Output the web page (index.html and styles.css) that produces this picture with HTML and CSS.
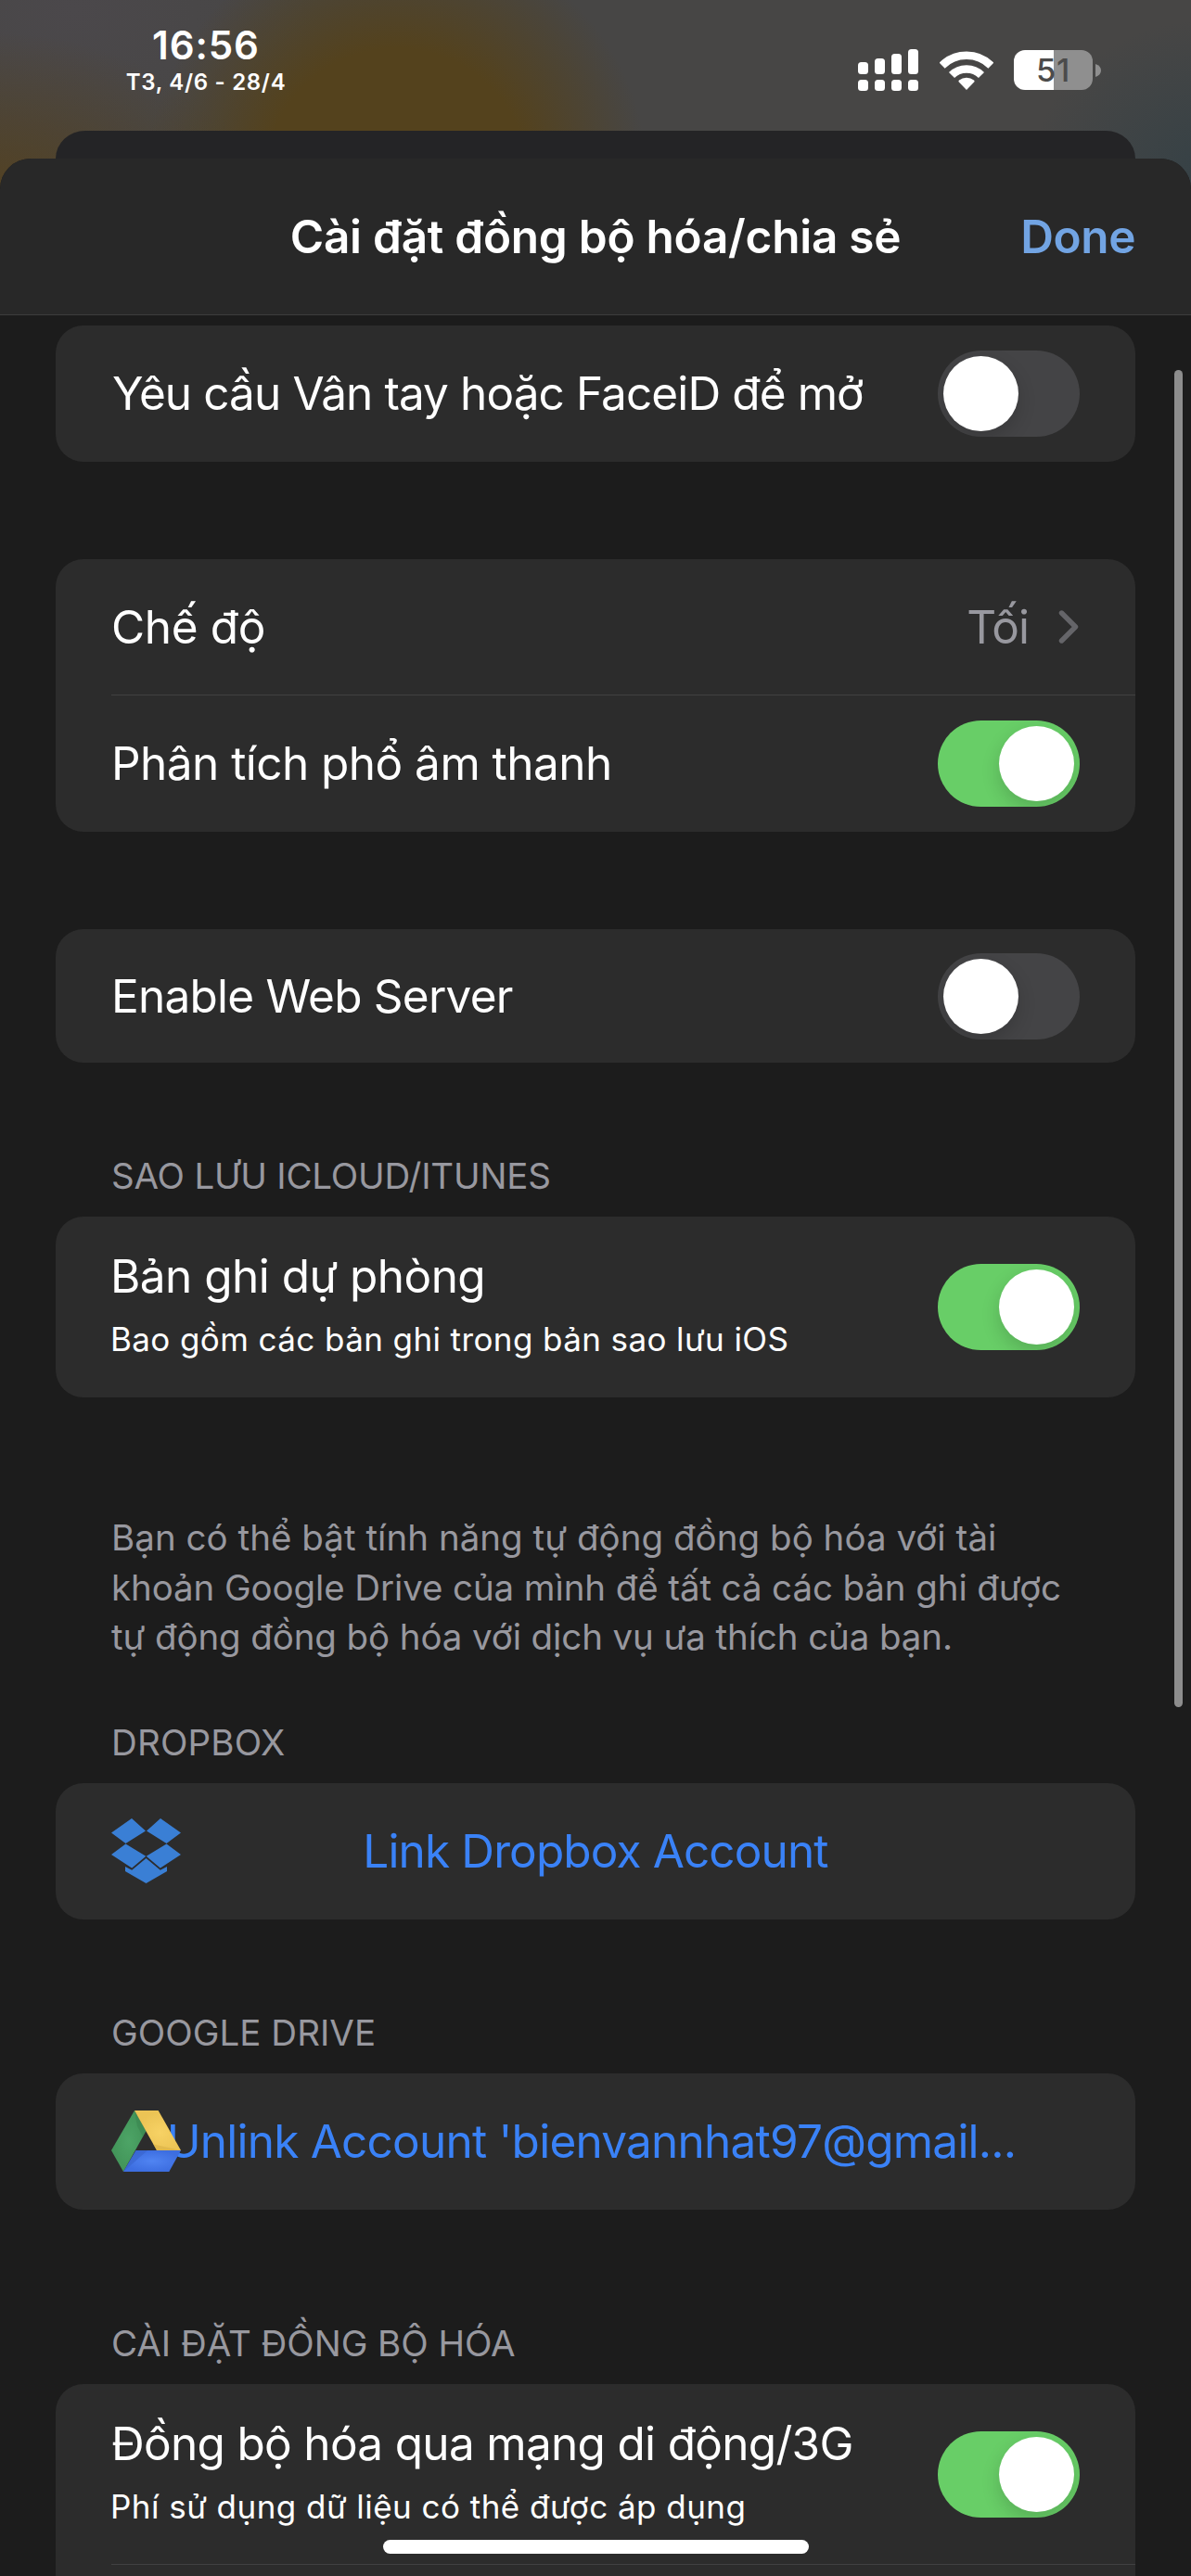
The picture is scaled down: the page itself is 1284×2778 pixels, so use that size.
FILE: index.html
```html
<!DOCTYPE html>
<html lang="vi">
<head>
<meta charset="utf-8">
<title>Cài đặt đồng bộ hóa/chia sẻ</title>
<link rel="stylesheet" href="styles.css">
</head>
<body>
<div class="screen">
  <header class="status">
    <div class="clock">
      <div class="time">16:56</div>
      <div class="date">T3, 4/6 - 28/4</div>
    </div>
    <div class="indicators">
      <svg class="signal" viewBox="0 0 65 46" fill="#fff">
        <rect x="0" y="14" width="11" height="13" rx="3.5"/><rect x="18" y="10" width="11" height="17" rx="3.5"/><rect x="36" y="5" width="11" height="22" rx="3.5"/><rect x="54" y="0" width="11" height="27" rx="3.5"/>
        <rect x="0" y="33" width="11" height="12" rx="3.5"/><rect x="18" y="33" width="11" height="12" rx="3.5"/><rect x="36" y="33" width="11" height="12" rx="3.5"/><rect x="54" y="33" width="11" height="12" rx="3.5"/>
      </svg>
      <svg class="wifi" viewBox="0 0 58 42">
        <g fill="none" stroke="#fff" stroke-width="8.6">
          <path d="M2.6 15.6A37.4 37.4 0 0 1 55.4 15.6"/>
          <path d="M13 26A22.8 22.8 0 0 1 45 26"/>
        </g>
        <path d="M29 42L20.6 33.2Q20 32.4 21 31.6A12.7 12.7 0 0 1 37 31.6Q38 32.4 37.4 33.2Z" fill="#fff"/>
      </svg>
      <div class="battery"><span class="level">51</span></div>
      <svg class="nub" viewBox="0 0 6 14"><path d="M0 0Q6 2 6 7T0 14Z" fill="#8f8f8f"/></svg>
    </div>
  </header>
  <div class="sheet-behind"></div>
  <main class="sheet">
    <div class="navbar">
      <h1 class="nav-title">Cài đặt đồng bộ hóa/chia sẻ</h1>
      <span class="done">Done</span>
    </div>

    <section class="card first">
      <div class="row"><span class="label lock">Yêu cầu Vân tay hoặc FaceiD để mở</span><span class="switch"></span></div>
    </section>

    <section class="card">
      <div class="row"><span class="label mode">Chế độ</span><span class="value">Tối</span>
        <svg class="chevron" viewBox="0 0 22 38"><path d="M3.5 4L18.5 19L3.5 34" fill="none" stroke="#656569" stroke-width="5.4" stroke-linecap="round" stroke-linejoin="round"/></svg>
      </div>
      <div class="divider"></div>
      <div class="row"><span class="label spectrum">Phân tích phổ âm thanh</span><span class="switch on"></span></div>
    </section>

    <section class="card short">
      <div class="row"><span class="label server">Enable Web Server</span><span class="switch"></span></div>
    </section>

    <h2 class="group">SAO LƯU ICLOUD/ITUNES</h2>
    <section class="card titled">
      <div class="row tall">
        <div class="stack"><span class="label backup">Bản ghi dự phòng</span><span class="sub">Bao gồm các bản ghi trong bản sao lưu iOS</span></div>
        <span class="switch on"></span>
      </div>
    </section>

    <p class="note"><span class="lead">Bạn có thể bật tính năng tự động đồng bộ hóa với tài</span><br>khoản Google Drive của mình để tất cả các bản ghi được<br>tự động đồng bộ hóa với dịch vụ ưa thích của bạn.</p>

    <h2 class="group dropbox">DROPBOX</h2>
    <section class="card titled">
      <div class="row link"><span class="action">Link Dropbox Account</span>
        <svg class="service" viewBox="0 0 75 70" fill="#3a7fd5">
          <path d="M22 0L37 13.5L15.5 27L0 15.5ZM53 0L75 15.5L59.5 27L38 13.5ZM15.5 27.5L37.3 40.8L22.2 53.5L0 39ZM59.5 27.5L75 39L52.8 53.5L37.7 40.8ZM37.5 43L52.8 55.8L60 52V57L37.5 70L15 57V52L22.2 55.8Z"/>
        </svg>
      </div>
    </section>

    <h2 class="group drive">GOOGLE DRIVE</h2>
    <section class="card titled">
      <div class="row link"><span class="action account">Unlink Account 'bienvannhat97@gmail...</span>
        <svg class="service" viewBox="0 0 75 66">
          <defs>
            <radialGradient id="g"><stop offset="0" stop-color="#4da466"/><stop offset="1" stop-color="#429459"/></radialGradient>
            <radialGradient id="y" cx=".55" cy=".55"><stop offset="0" stop-color="#f7d265"/><stop offset="1" stop-color="#ecc455"/></radialGradient>
            <radialGradient id="b"><stop offset="0" stop-color="#5084f2"/><stop offset="1" stop-color="#3d6ee0"/></radialGradient>
          </defs>
          <path d="M25 0L37.5 22L13 66L0 43Z" fill="url(#g)"/>
          <path d="M25 0L28 17L34 28L37.5 22Z" fill="#3b8650" opacity=".6"/>
          <path d="M25 0H50.7L75 43H49Z" fill="url(#y)"/>
          <path d="M45.5 36.5L75 43H49Z" fill="#d9b046" opacity=".6"/>
          <path d="M26.5 43H75L62.3 66H13Z" fill="url(#b)"/>
          <path d="M26.5 43H39L13 66Z" fill="#365fc6" opacity=".5"/>
        </svg>
      </div>
    </section>

    <h2 class="group sync">CÀI ĐẶT ĐỒNG BỘ HÓA</h2>
    <section class="card titled last">
      <div class="row tall">
        <div class="stack"><span class="label">Đồng bộ hóa qua mạng di động/3G</span><span class="sub fees">Phí sử dụng dữ liệu có thể được áp dụng</span></div>
        <span class="switch on"></span>
      </div>
      <div class="divider"></div>
    </section>
  </main>
  <div class="scrollbar"></div>
  <div class="home"></div>
</div>
</body>
</html>
```
FILE: styles.css
```css
* { box-sizing: border-box; }
body { margin: 0; background: #1c1c1c; }
h1, h2, p { margin: 0; }
svg { display: block; flex: none; }

.screen {
  position: relative;
  width: 1284px;
  height: 2778px;
  overflow: hidden;
  display: flex;
  flex-direction: column;
  color: #fff;
  font-family: Inter, "Liberation Sans", sans-serif;
  background:
    radial-gradient(ellipse 270px 265px at 428px 190px, #54421d 0, #54421d 52%, rgba(84, 66, 29, 0) 100%),
    radial-gradient(ellipse 280px 190px at -10px 225px, #54411f 0, rgba(84, 65, 31, 0) 100%),
    radial-gradient(ellipse 200px 170px at 1310px 190px, #354146 0, rgba(53, 65, 70, 0) 100%),
    radial-gradient(ellipse 260px 180px at 80px 10px, #4b484b 0, rgba(75, 72, 75, 0) 100%),
    #474645;
}

.status { height: 141px; flex: none; display: flex; justify-content: space-between; padding: 0 97px 0 135px; }
.clock { width: 174px; text-align: center; padding-top: 24px; white-space: nowrap; }
.time { font-size: 42px; font-weight: 600; line-height: 50px; letter-spacing: .9px; }
.date { font-size: 24px; font-weight: 600; line-height: 29px; letter-spacing: .7px; }
.indicators { display: flex; align-items: center; height: 151px; }
.signal { width: 65px; height: 46px; margin-right: 23px; }
.wifi { width: 58px; height: 42px; margin-right: 22px; }
.battery {
  width: 85px; height: 43px; border-radius: 12px;
  display: flex; align-items: center; justify-content: center;
  background: linear-gradient(90deg, #fff 43px, #8f8f8f 43px);
}
.level { font-size: 34.5px; font-weight: 500; line-height: 43px; color: #4b4b4b; letter-spacing: .8px; }
.nub { width: 6px; height: 14px; margin-left: 3px; }

.sheet-behind { height: 30px; flex: none; margin: 0 60px; background: #242426; border-radius: 32px 32px 0 0 / 30px 30px 0 0; }
.sheet { flex: 1; background: #1c1c1c; border-radius: 33px 33px 0 0; overflow: hidden; }
.navbar {
  height: 169px;
  display: flex; align-items: center; justify-content: center;
  position: relative;
  background: #282828;
  border-bottom: 1px solid #3c3c3d;
}
.nav-title { font-size: 49.5px; font-weight: 600; line-height: 60px; letter-spacing: -.25px; }
.done { position: absolute; right: 60px; font-size: 49.5px; font-weight: 600; line-height: 60px; letter-spacing: -.4px; color: #72a4e3; }

.card { margin: 105px 60px 0; background: #2c2c2c; border-radius: 30px; }
.card.first { margin-top: 11px; }
.card.titled { margin-top: 19px; }
.row { height: 147px; display: flex; align-items: center; padding: 0 60px; position: relative; }
.row:has(.chevron) { height: 146px; }
.short .row { height: 144px; }
.row.tall { height: 195px; padding-left: 59px; }
.last .row.tall { height: 194px; padding-left: 60px; }
.last { height: 260px; }
.divider { height: 1px; margin-left: 60px; background: #414142; }

.label { flex: 1; font-size: 49.5px; line-height: 60px; letter-spacing: -.69px; white-space: nowrap; }
.lock { letter-spacing: -.9px; margin: -2px 0 0 1px; }
.mode { letter-spacing: -.34px; }
.spectrum { letter-spacing: -.54px; margin-top: -2px; }
.server { letter-spacing: -.76px; }
.backup { letter-spacing: -.53px; }
.value { font-size: 49.5px; line-height: 60px; letter-spacing: -1px; color: #98989f; margin-right: 32px; }
.chevron { width: 22px; height: 38px; margin-right: 1px; }
.stack { flex: 1; display: flex; flex-direction: column; gap: 13px; padding-bottom: 4px; }
.stack .label { flex: none; }
.sub { font-size: 35px; line-height: 50px; letter-spacing: .4px; }
.sub.fees { letter-spacing: .46px; margin-left: -1px; }

.switch { width: 153px; height: 93px; flex: none; border-radius: 47px; padding: 6px; background: #444446; overflow: hidden; }
.switch::before {
  content: ""; display: block; width: 81px; height: 81px; border-radius: 50%;
  background: #fff; box-shadow: 0 8px 20px rgba(0, 0, 0, .16);
}
.switch.on { background: #68ce67; }
.switch.on::before { margin-left: auto; }

.group { margin: 97px 120px 0; font-size: 38.5px; font-weight: 400; line-height: 50px; letter-spacing: -.21px; color: #98989f; }
.group.dropbox { margin-top: 61px; letter-spacing: .18px; }
.group.drive { letter-spacing: .04px; }
.group.sync { margin-top: 119px; letter-spacing: -.04px; }
.note { margin: 125px 100px 0 120px; font-size: 38.5px; line-height: 53.7px; letter-spacing: -.105px; color: #98989f; white-space: nowrap; }
.lead { letter-spacing: .035px; }

.row.link { justify-content: center; padding: 0 0 2px; }
.action { font-size: 49.5px; line-height: 60px; letter-spacing: -.87px; color: #3a82f7; white-space: nowrap; }
.account { letter-spacing: -.77px; margin-right: 9px; }
.service { position: absolute; left: 60px; width: 75px; }

.scrollbar { position: absolute; left: 1266px; top: 399px; width: 9px; height: 1442px; border-radius: 5px; background: #8d8d8d; }
.home { position: absolute; left: 413px; top: 2739px; width: 459px; height: 15px; border-radius: 8px; background: #fff; }
```
